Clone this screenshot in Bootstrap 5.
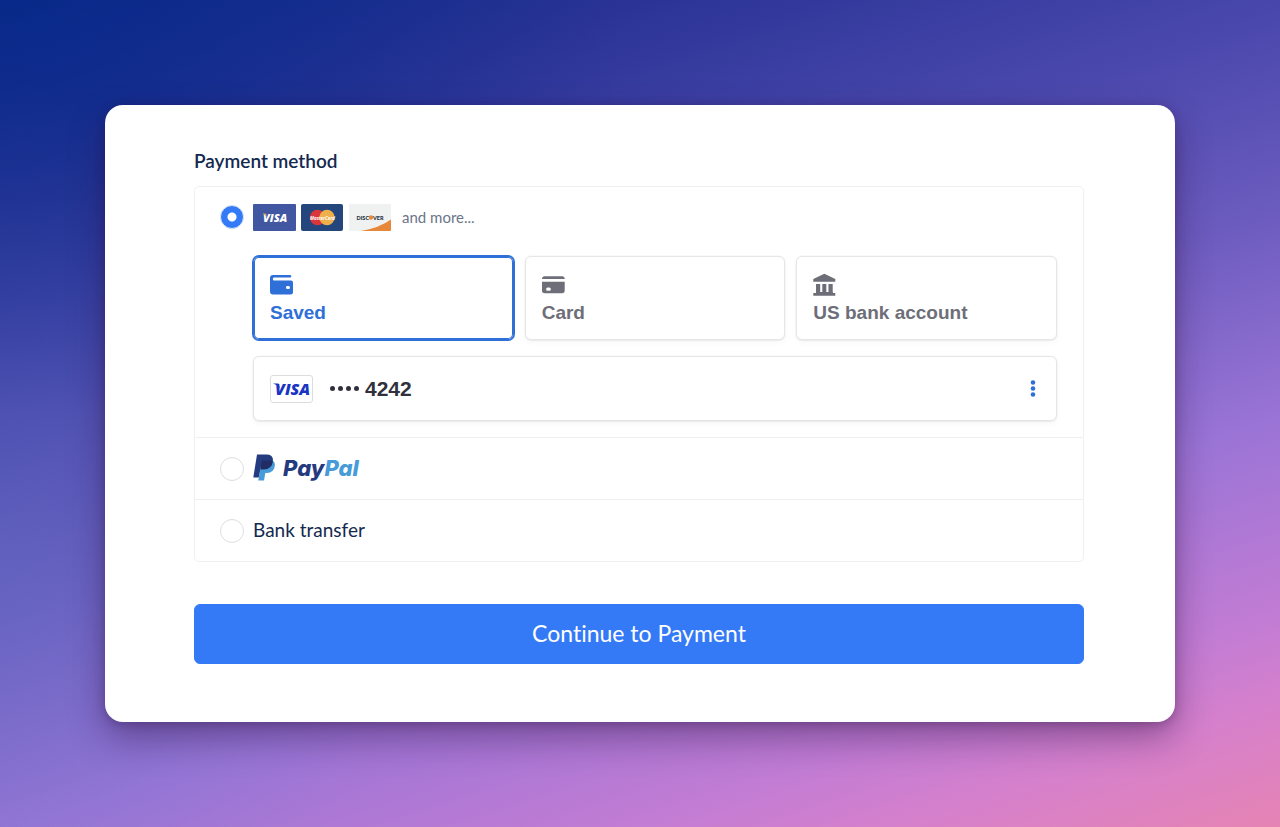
<!DOCTYPE html>
<html lang="en">
<head>
<meta charset="utf-8">
<meta name="viewport" content="width=device-width, initial-scale=1">
<title>Payment method</title>
<link href="https://cdn.jsdelivr.net/npm/bootstrap@5.3.0/dist/css/bootstrap.min.css" rel="stylesheet">
<style>
  body {
    font-family: Lato, "Noto Sans", sans-serif;
    color: #14294f;
    background:
      radial-gradient(ellipse 45% 45% at 4% 5%, rgba(6,42,140,.6), rgba(6,42,140,0)),
      radial-gradient(ellipse 30% 60% at 0% 70%, rgba(100,125,205,.3), rgba(100,125,205,0)),
      linear-gradient(162deg, #0b2886 0%, #2b3496 17%, #4947ac 34%, #6b5bbe 50%, #9a74d6 67%, #c27cd4 83%, #d680cc 90%, #e583b3 100%);
  }
  .page-frame { padding: 105px; }
  .pay-panel {
    border-radius: 18px;
    padding: 43px 91px 58px 89px;
    box-shadow: 0 16px 36px rgba(45,15,65,.42), 0 2px 10px rgba(45,15,65,.25);
  }
  .pay-title { font-size: 19px; line-height: 25px; font-weight: 600; color: #14294f; margin-bottom: 13px; }
  .method-list { --bs-list-group-border-color: #f0f0f2; --bs-list-group-border-radius: 5px; margin-bottom: 42px; }
  .method-item { padding: 0 26px 0 25px; color: #14294f; }
  .method-line { min-height: 61px; gap: 9px; }
  .card-line { min-height: 60px; }
  .method-radio.form-check-input { width: 24px; height: 24px; margin: 0; border: 1px solid #dedee2; flex: none; }
  .method-radio.form-check-input:checked { background-color: #347af6; border-color: #dde5f5;
    background-image: radial-gradient(circle, #fff 4px, transparent 5px); }
  .more-text { font-size: 15px; color: #6b7589; margin-left: 5px; }
  .method-name { font-size: 19px; }
  .brand-row { gap: 5px; }
  .method-detail { padding: 9px 0 16px 33px; }
  .tab-grid { display: grid; grid-template-columns: repeat(3, minmax(0, 1fr)); gap: 11px; margin-bottom: 16px; }
  .pay-tab, .saved-card {
    font-family: "Liberation Sans", Arial, sans-serif; font-weight: 700;
    background: #fff; border: 1px solid #e6e6e6; border-radius: 6px;
    box-shadow: 0 1px 1px rgba(0,0,0,.04), 0 3px 6px rgba(0,0,0,.03), 0 0 0 1px rgba(0,0,0,.02);
  }
  .pay-tab { padding: 16px 16px 12px; font-size: 19px; line-height: 28px; color: #6d6e78; text-align: left; }
  .pay-tab svg { display: block; margin-bottom: 2px; }
  .pay-tab.active { color: #2f6fd8; border-color: #2f6fd8; box-shadow: inset 0 0 0 1px #2f6fd8, 0 0 0 1px #2f6fd8; }
  .saved-card { padding: 0 16px; min-height: 65px; font-size: 21px; color: #30313d; }
  .card-dots { gap: 3px; margin: 0 6px 0 17px; }
  .card-dots i { width: 5px; height: 5px; border-radius: 50%; background: #30313d; }
  .menu-btn { color: #2f6fd8; line-height: 1; }
  .pay-btn { --bs-btn-bg: #347af6; --bs-btn-border-color: #347af6; height: 60px; padding: 0 12px 2px; font-size: 23px; border-radius: 6px; }
  .pay-title, .method-name, .more-text, .pay-btn { font-variant-ligatures: none; font-feature-settings: "liga" 0, "dlig" 0, "clig" 0; }
</style>
</head>
<body>
<div class="page-frame min-vh-100">
  <main class="pay-panel bg-white">
    <form>
      <h1 class="pay-title">Payment method</h1>
      <div class="list-group method-list">
        <div class="list-group-item method-item">
          <div class="method-line card-line d-flex align-items-center">
            <input class="form-check-input method-radio" type="radio" name="method" id="m-card" checked>
            <label for="m-card" class="d-flex align-items-center brand-row">
              <svg width="43" height="27" viewBox="0 0 43 27" role="img" aria-label="Visa">
                <rect width="43" height="27" rx="1" fill="#4257a2"/>
                <text x="10" y="17.500" font-family="Open Sans" font-size="11" font-weight="800" font-style="italic" fill="#fff">VISA</text>
                <path d="M9.500 9.500h3l1 4q-1-2.500-4-4z" fill="#e9a243"/>
              </svg>
              <svg width="43" height="27" viewBox="0 0 43 27" role="img" aria-label="MasterCard">
                <rect width="42" height="27" rx="2" fill="#24467c"/>
                <circle cx="16.500" cy="13.500" r="7.700" fill="#d9353b"/><circle cx="26" cy="13.500" r="7.700" fill="#eeb04a"/>
                <text x="9" y="15.500" font-family="Open Sans" font-size="4.500" font-weight="700" font-style="italic" fill="#fff">MasterCard</text>
              </svg>
              <svg width="43" height="27" viewBox="0 0 43 27" role="img" aria-label="Discover">
                <rect width="42" height="27" rx="1" fill="#f0f2f2"/>
                <path d="M12 27Q30 24 42 15.500V26q0 1-1 1z" fill="#e6873a"/>
                <text x="7.500" y="15.500" font-family="Lato" font-size="5.500" font-weight="900" fill="#24303c">DISC</text>
                <circle cx="22" cy="13.500" r="2.200" fill="#e6873a"/>
                <text x="24" y="15.500" font-family="Lato" font-size="5.500" font-weight="900" fill="#24303c">VER</text>
              </svg>
              <span class="more-text">and more...</span>
            </label>
          </div>
          <div class="method-detail">
            <div class="tab-grid">
              <button type="button" class="pay-tab active">
                <svg width="24" height="24" viewBox="0 0 24 24"><path fill="currentColor" fill-rule="evenodd" d="M3 2h17q1.300 0 1.300 1.200T20 4.500H4Q2.800 4.500 2.800 6T4 7.500h17q2 0 2 2V19q0 2.500-2.500 2.500H3Q0 21.500 0 18.500V5Q0 2 3 2zM17 13a1.600 1.600 0 0 0 0 3h1.500a1.500 1.500 0 0 0 0-3z"/></svg>
                Saved
              </button>
              <button type="button" class="pay-tab">
                <svg width="24" height="24" viewBox="0 0 24 24"><path fill="currentColor" fill-rule="evenodd" d="M0 6Q0 3.300 2.700 3.300H20Q22.700 3.300 22.700 6zM0 8.800H22.700V17.500Q22.700 20.300 20 20.300H2.700Q0 20.300 0 17.500zM5.700 14.600a1.600 1.600 0 0 0 0 3.200h1.600a1.600 1.600 0 0 0 0-3.200z"/></svg>
                Card
              </button>
              <button type="button" class="pay-tab">
                <svg width="24" height="24" viewBox="0 0 24 24"><path fill="currentColor" d="M11.300.800L22.300 6v2.700H.300V6zM3 11h4.200v9H3zm6.300 0h4v9h-4zm6.200 0h4.200v9h-4.200zM3 19h17v1H3zM.300 20H22.300v2.800H.300z"/></svg>
                US bank account
              </button>
            </div>
            <div class="saved-card d-flex align-items-center">
              <svg width="43" height="28" viewBox="0 0 43 28" role="img" aria-label="Visa">
                <rect x=".5" y=".5" width="42" height="27" rx="2.500" fill="#fff" stroke="#dcdce0"/>
                <text x="5" y="20" font-family="Open Sans" font-size="16" font-weight="800" font-style="italic" fill="#1a34c4">VISA</text>
                <path d="M3 8.500h5.500l1.500 5q-2-3.500-7-5z" fill="#1a34c4"/>
              </svg>
              <span class="card-dots d-flex"><i></i><i></i><i></i><i></i></span>
              <span>4242</span>
              <button type="button" class="btn p-0 border-0 ms-auto menu-btn" aria-label="Card options">
                <svg width="14" height="20" viewBox="0 0 14 20" fill="currentColor" class="d-block"><circle cx="7" cy="3.500" r="2.300"/><circle cx="7" cy="9.500" r="2.300"/><circle cx="7" cy="15.500" r="2.300"/></svg>
              </button>
            </div>
          </div>
        </div>
        <div class="list-group-item method-item">
          <div class="method-line d-flex align-items-center">
            <input class="form-check-input method-radio" type="radio" name="method" id="m-paypal">
            <label for="m-paypal">
              <svg class="d-block" width="116" height="38" viewBox="0 -4 116 38" role="img" aria-label="PayPal">
                <path d="M4 .500H13.500Q20.500.500 20 7Q19 15.500 10.500 15.500H7.500L5.800 23.500H.300z" fill="#253b80"/>
                <path d="M19.600 6.500Q22.600 8.500 21.700 12.500Q20.500 19 14 19H12.300L11 26.500H5.300L7.500 13.500z" fill="#469bd8"/>
                <path d="M9 6.500H17Q19 6.500 20 7Q19 15.500 10.500 15.500H7.500z" fill="#222d65"/>
                <text x="30" y="22" font-family="Inter" font-size="22" font-weight="800" font-style="italic"><tspan fill="#253b80">Pay</tspan><tspan fill="#469bd8">Pal</tspan></text>
              </svg>
            </label>
          </div>
        </div>
        <div class="list-group-item method-item">
          <div class="method-line d-flex align-items-center">
            <input class="form-check-input method-radio" type="radio" name="method" id="m-bank">
            <label for="m-bank" class="method-name">Bank transfer</label>
          </div>
        </div>
      </div>
      <button type="submit" class="btn btn-primary w-100 pay-btn">Continue to Payment</button>
    </form>
  </main>
</div>
<script src="https://cdn.jsdelivr.net/npm/bootstrap@5.3.0/dist/js/bootstrap.bundle.min.js"></script>
</body>
</html>
